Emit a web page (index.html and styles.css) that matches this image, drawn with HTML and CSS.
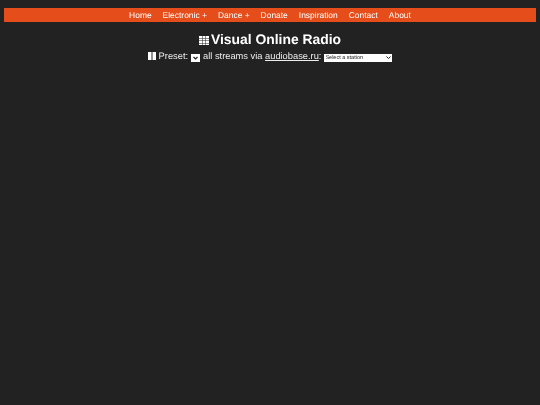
FILE: index.html
```html
<!DOCTYPE html>
<html lang="en">
<head>
<meta charset="utf-8">
<title>Visual Online Radio</title>
<link rel="stylesheet" href="styles.css">
</head>
<body>
<nav class="nav">
  <a href="#">Home</a>
  <a href="#">Electronic +</a>
  <a href="#">Dance +</a>
  <a href="#">Donate</a>
  <a href="#">Inspiration</a>
  <a href="#">Contact</a>
  <a href="#">About</a>
</nav>
<h1 class="title">
  <svg class="grid-icon" viewBox="0 0 10 9" width="10" height="9" aria-hidden="true">
    <path fill="#fff" d="M0 0h3v2H0zM3.5 0h3v2h-3zM7 0h3v2H7zM0 2.5h3v2H0zM3.5 2.5h3v2h-3zM7 2.5h3v2H7zM0 5h3v2H0zM3.5 5h3v2h-3zM7 5h3v2H7zM0 7.5h3V9H0zM3.5 7.5h3V9h-3zM7 7.5h3V9H7z"/>
  </svg>
  <span>Visual Online Radio</span>
</h1>
<div class="controls">
  <svg class="pause" viewBox="0 0 8 8" width="8" height="8" aria-hidden="true"><path fill="#fff" d="M0 0h3.5v8H0zM4.5 0H8v8H4.5z"/></svg>
  <span>Preset:</span>
  <span class="preset"><svg viewBox="0 0 9 8" width="9" height="8" aria-hidden="true"><path d="M2.5 3 4.5 5 6.5 3" fill="none" stroke="#222" stroke-width="1.2"/></svg></span>
  <span>all streams via <a href="#">audiobase.ru</a>:</span>
  <select class="station"><option>Select a station</option></select>
</div>
</body>
</html>
```
FILE: styles.css
```css
html, body {
  margin: 0;
  height: 100%;
  background: #222222;
}
body {
  padding: 8px 4px 0;
  box-sizing: border-box;
  color: #fff;
  font-family: "Liberation Sans", Arial, sans-serif;
  text-rendering: geometricPrecision;
}
.nav {
  display: flex;
  justify-content: center;
  gap: 11px;
  height: 14px;
  background: #e54e1b;
  font-size: 8.45px;
  line-height: 14px;
}
.nav a {
  color: #fff;
  text-decoration: none;
  will-change: opacity;
}
.title {
  display: flex;
  justify-content: center;
  align-items: center;
  gap: 2px;
  margin: 8px 0 0;
  font-size: 13.9px;
  line-height: 18px;
  font-weight: bold;
  will-change: opacity;
}
.grid-icon {
  margin-top: 2px;
}
.controls {
  display: flex;
  justify-content: center;
  align-items: center;
  gap: 3px;
  margin-top: 1px;
  font-size: 9.3px;
  line-height: 14px;
  color: #eee;
  will-change: opacity;
}
.controls a {
  color: #eee;
}
.preset {
  display: flex;
  width: 9px;
  height: 8px;
  margin-top: 3px;
  background: #fff;
}
.station {
  appearance: none;
  width: 68px;
  height: 8px;
  margin: 3px 0 0;
  padding: 0 0 0 1px;
  border: 0;
  border-radius: 0;
  background: #fff url("data:image/svg+xml,%3Csvg xmlns='http://www.w3.org/2000/svg' width='5' height='3'%3E%3Cpath d='M.5 .5 2.5 2.5 4.5 .5' fill='none' stroke='%23222'/%3E%3C/svg%3E") no-repeat right 1.5px center;
  color: #222;
  font-family: "Liberation Sans", Arial, sans-serif;
  font-size: 5.5px;
  text-rendering: geometricPrecision;
}
```
